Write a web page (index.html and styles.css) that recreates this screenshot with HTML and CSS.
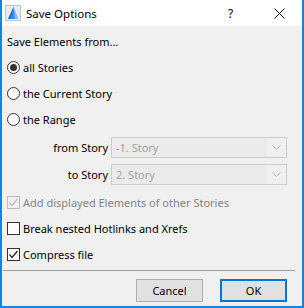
FILE: index.html
```html
<!DOCTYPE html>
<html lang="en">
<head>
  <meta charset="UTF-8" />
  <title>Save Options</title>
  <link rel="stylesheet" href="styles.css">
</head>
<body>

  <div class="window">
    <div class="titlebar">
      <svg class="app-icon" width="16" height="16" viewBox="0 0 16 16">
        <rect x="0.5" y="0.5" width="15" height="15" fill="#e4ebf3" stroke="#b9c7d6"/>
        <path d="M3 14 L8.5 2 L13 14 Z" fill="#3d8ae6"/>
        <path d="M8.5 2 L13 14 L10 14 Z" fill="#8fc0f4"/>
        <path d="M3 14 L8.5 2 L6 14 Z" fill="#1f6fd6"/>
      </svg>
      <span class="title">Save Options</span>
      <span class="help">?</span>
      <svg class="close" width="11" height="11" viewBox="0 0 11 11">
        <path d="M0.5 0.5 L10.5 10.5 M10.5 0.5 L0.5 10.5" stroke="#111" stroke-width="1"/>
      </svg>
    </div>

    <div class="content">
      <div class="heading">Save Elements from...</div>

      <div class="row">
        <span class="radio checked"></span>
        <span>all Stories</span>
      </div>
      <div class="row">
        <span class="radio"></span>
        <span>the Current Story</span>
      </div>
      <div class="row">
        <span class="radio"></span>
        <span>the Range</span>
      </div>

      <div class="select-row first">
        <span class="select-label">from Story</span>
        <div class="select">
          <span class="select-value">-1. Story</span>
          <span class="select-arrow">
            <svg width="9" height="5" viewBox="0 0 9 5"><path d="M0.5 0.5 L4.5 4.5 L8.5 0.5" fill="none" stroke="#b4b4b4"/></svg>
          </span>
        </div>
      </div>
      <div class="select-row">
        <span class="select-label">to Story</span>
        <div class="select">
          <span class="select-value">2. Story</span>
          <span class="select-arrow">
            <svg width="9" height="5" viewBox="0 0 9 5"><path d="M0.5 0.5 L4.5 4.5 L8.5 0.5" fill="none" stroke="#b4b4b4"/></svg>
          </span>
        </div>
      </div>

      <div class="row check-first disabled">
        <span class="checkbox">
          <svg width="11" height="11" viewBox="0 0 11 11"><path d="M1.5 5.5 L4 8.5 L9.5 2" fill="none" stroke="#bdbdbd" stroke-width="1.2"/></svg>
        </span>
        <span>Add displayed Elements of other Stories</span>
      </div>
      <div class="row">
        <span class="checkbox"></span>
        <span>Break nested Hotlinks and Xrefs</span>
      </div>
      <div class="row">
        <span class="checkbox">
          <svg width="11" height="11" viewBox="0 0 11 11"><path d="M1.5 5.5 L4 8.5 L9.5 2" fill="none" stroke="#222" stroke-width="1.2"/></svg>
        </span>
        <span>Compress file</span>
      </div>
    </div>

    <div class="separator"></div>

    <div class="buttons">
      <button class="btn">Cancel</button>
      <button class="btn default">OK</button>
    </div>
  </div>

</body>
</html>
```

FILE: styles.css
```css
* {
  margin: 0;
  padding: 0;
  box-sizing: border-box;
}

body {
  font-family: 'Noto Sans', 'Open Sans', sans-serif;
  font-size: 11px;
  color: #000;
  background: #f0f0f0;
}

.window {
  width: 304px;
  height: 308px;
  background: #f0f0f0;
  border: 2px solid #1883d7;
  border-top: none;
  display: flex;
  flex-direction: column;
}

.titlebar {
  height: 26px;
  background: #fff;
  display: flex;
  align-items: center;
}

.app-icon {
  margin-left: 3px;
  flex-shrink: 0;
}

.title {
  margin-left: 5px;
  font-size: 11.5px;
  flex: 1;
}

.help {
  width: 10px;
  font-size: 12px;
  margin-right: 36px;
}

.close {
  margin-right: 17px;
  margin-top: 1px;
}

.content {
  padding-left: 5px;
  display: flex;
  flex-direction: column;
}

.heading {
  height: 20px;
  line-height: 20px;
  margin-top: 6px;
  margin-bottom: 2px;
}

.row {
  height: 26px;
  display: flex;
  align-items: center;
  gap: 3px;
}

.radio {
  width: 13px;
  height: 13px;
  border: 1px solid #333;
  border-radius: 50%;
  background: #fff;
  display: flex;
  align-items: center;
  justify-content: center;
}

.radio.checked::after {
  content: "";
  width: 7px;
  height: 7px;
  border-radius: 50%;
  background: #333;
}

.select-row {
  height: 27px;
  display: flex;
  align-items: center;
  margin-left: -5px;
}

.select-row.first {
  margin-top: 2px;
}

.select-label {
  width: 106px;
  text-align: right;
}

.select {
  margin-left: 3px;
  width: 176px;
  height: 21px;
  border: 1px solid #cccccc;
  display: flex;
  color: #a2a2a2;
}

.select-value {
  flex: 1;
  background: #ebebeb;
  padding-left: 4px;
  line-height: 19px;
}

.select-arrow {
  width: 19px;
  display: flex;
  align-items: center;
  justify-content: center;
  background: #f0f0f0;
}

.check-first {
  margin-top: 1px;
}

.checkbox {
  width: 13px;
  height: 13px;
  border: 1px solid #333;
  background: #fff;
  display: flex;
  align-items: center;
  justify-content: center;
}

.disabled {
  color: #838383;
}

.disabled .checkbox {
  border-color: #bcbcbc;
  background: #f0f0f0;
}

.separator {
  margin: 3px 7px 0 1px;
  height: 1px;
  background: #a0a0a0;
}

.buttons {
  display: flex;
  justify-content: flex-end;
  gap: 17px;
  padding-right: 15px;
  margin-top: 8px;
}

.btn {
  width: 67px;
  height: 23px;
  font-family: inherit;
  font-size: 11px;
  background: #e1e1e1;
  border: 1px solid #adadad;
  color: #000;
}

.btn.default {
  border: 2px solid #0078d7;
}
```
